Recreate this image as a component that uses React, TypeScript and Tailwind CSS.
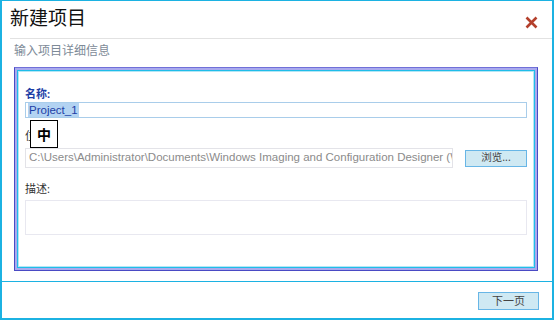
import React from "react";

const font = { fontFamily: '"Noto Sans", "Noto Sans CJK SC", sans-serif' };
const latin = { fontFamily: '"Liberation Sans", "Noto Sans CJK SC", sans-serif' };

export default function App() {
  return (
    <div
      className="w-[554px] h-[320px] bg-white border-2 border-t border-[#1cb2e2] flex flex-col overflow-hidden box-border"
      style={font}
    >
      {/* header */}
      <div className="h-[37px] flex items-center justify-between pl-[8px] pr-[14px]">
        <div className="text-[19px] leading-[22px] text-[#111] mt-[-3px]">新建项目</div>
        <svg width="13" height="13" viewBox="0 0 13 13" className="mt-[5px]">
          <path d="M1.5 1.5 L11.5 11.5 M11.5 1.5 L1.5 11.5" stroke="#b4402c" strokeWidth="2.6" strokeLinecap="butt" />
        </svg>
      </div>
      <div className="ml-[8px] border-t border-[#e2e2e2]" />
      <div className="pl-[12px] mt-[4px] text-[12px] leading-[16px] text-[#7d8a97]">输入项目详细信息</div>

      {/* panel */}
      <div className="ml-[12px] mr-[14px] mt-[8px] h-[204px] border border-[#4a4ac4] border-t-[#7070d8]">
        <div className="h-full border-2 border-[#a9a9ee]">
          <div className="h-full border border-[#1fbde9]">
            <div className="h-full border border-[#b4e6f5] relative px-[6px]">
              <div className="pt-[15px] text-[11px] leading-[14px] font-bold text-[#1d3ea6]">名称:</div>
              <div className="mt-[1px] h-[16px] border border-[#a9cdea] flex items-center px-[2px]">
                <span className="bg-[#b3d3f2] text-[#1d3ea6] text-[11.5px] leading-[14px] px-[1px]" style={latin}>
                  Project_1
                </span>
              </div>
              <div className="mt-[11px] text-[11px] leading-[14px] text-[#333]">位置:</div>
              <div className="mt-[5px] flex items-center">
                <div
                  className="w-[428px] h-[20px] border border-[#e3e3e8] flex items-center pl-[3px] overflow-hidden whitespace-nowrap text-[11.5px] text-[#8b8b8b]"
                  style={latin}
                >
                  C:\Users\Administrator\Documents\Windows Imaging and Configuration Designer (W
                </div>
                <div className="ml-[12px] w-[62px] h-[17px] bg-[#cfe9f3] border border-[#68b6e6] flex items-center justify-center text-[10.5px] text-[#444]">
                  浏览...
                </div>
              </div>
              <div className="mt-[14px] text-[11px] leading-[14px] text-[#333]">描述:</div>
              <div className="mt-[4px] h-[35px] border border-[#e8e8f0]" />

              {/* IME indicator overlay */}
              <div className="absolute left-[11px] top-[48px] w-[28px] h-[28px] bg-white border border-black flex items-center justify-center text-[14px] font-bold text-black">
                中
              </div>
            </div>
          </div>
        </div>
      </div>

      <div className="flex-1" />
      {/* footer */}
      <div className="h-[37px] border-t border-[#1cb2e2] flex items-start justify-end pr-[13px] pt-[10px]">
        <div className="w-[61px] h-[18px] bg-[#cfe9f3] border border-[#68b6e6] flex items-center justify-center text-[11px] text-[#444]">
          下一页
        </div>
      </div>
    </div>
  );
}
